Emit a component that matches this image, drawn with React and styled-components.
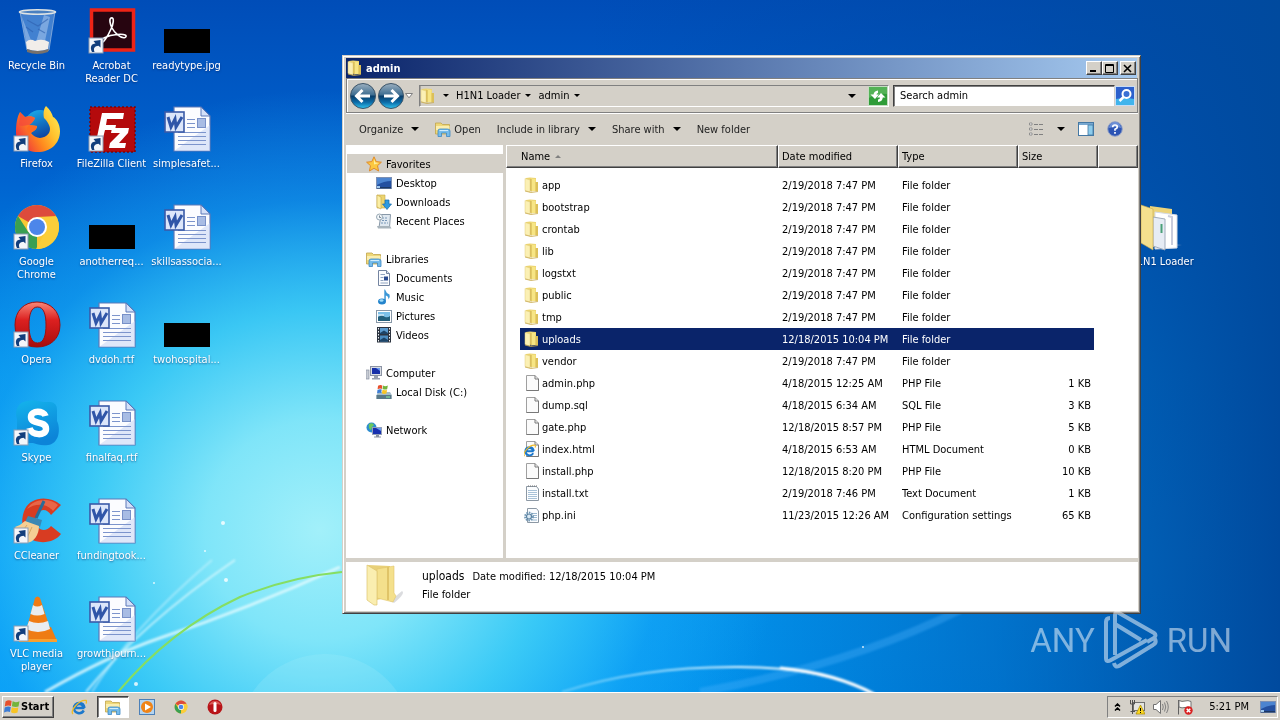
import React from "react";
import styled, { createGlobalStyle, css } from "styled-components";

const GlobalStyle = createGlobalStyle`
  * { box-sizing: border-box; }
  html, body, #root { height: 100%; }
  body {
    margin: 0;
    overflow: hidden;
    font-family: "DejaVu Sans Condensed", "DejaVu Sans", sans-serif;
    font-size: 11px;
    line-height: 13px;
    color: #000;
  }
  button, input { font: inherit; color: inherit; }
  svg { display: block; flex: none; }
`;

/* ---------- desktop ---------- */

const Screen = styled.div`
  position: relative;
  display: flex;
  flex-direction: column;
  height: 100vh;
  overflow: hidden;
`;

const Desktop = styled.main`
  position: relative;
  flex: 1;
  min-height: 0;
  background:
    radial-gradient(ellipse 460px 440px at 320px 530px, #a2f0fa 0%, rgba(134, 233, 249, 0.95) 25%, rgba(66, 208, 246, 0.88) 50%, rgba(30, 170, 245, 0.45) 75%, rgba(20, 150, 240, 0) 100%),
    linear-gradient(90deg, rgba(0, 72, 156, 0) 46%, rgba(0, 72, 160, 0.5) 78%, #004a9e 100%),
    linear-gradient(180deg, #004db8 0%, #0064d0 26%, #0090ec 54%, #04a0f8 80%, #009cf8 100%);
`;

const Streaks = styled.svg`
  position: absolute;
  left: 0;
  bottom: 0;
`;

const IconGrid = styled.div`
  position: relative;
  display: grid;
  grid-auto-flow: column;
  grid-template-rows: repeat(7, 98px);
  grid-auto-columns: 75px;
  padding-top: 7px;
`;

const Shortcut = styled.a`
  display: flex;
  flex-direction: column;
  align-items: center;
  gap: 4px;
  width: 73px;
  color: #fff;
  text-align: center;
  text-decoration: none;
  text-shadow: 0 1px 2px rgba(0, 30, 90, 0.6);
  grid-column: ${(p) => p.$col || "auto"};
  grid-row: ${(p) => p.$row || "auto"};
`;

const ShortcutLabel = styled.span`
  white-space: ${(p) => (p.$wrap ? "normal" : "nowrap")};
`;

/* ---------- window frame ---------- */

const Window = styled.section`
  position: absolute;
  left: 342px;
  right: 139px;
  top: 55px;
  padding: 2px;
  background: #d4d0c8;
  border: 1px solid;
  border-color: #d4d0c8 #404040 #404040 #d4d0c8;
  box-shadow: inset 1px 1px 0 #fff, inset -1px -1px 0 #808080;
`;

const TitleBar = styled.header`
  display: flex;
  align-items: center;
  gap: 3px;
  height: 20px;
  margin: 0 1px;
  padding: 0 1px;
  color: #fff;
  background: linear-gradient(90deg, #0a246a, #a6caf0);
`;

const Title = styled.h1`
  flex: 1;
  margin: 0;
  font-size: 11px;
  font-weight: bold;
`;

const TitleButtons = styled.div`
  display: flex;
`;

const raised = css`
  background: #d4d0c8;
  border: 1px solid;
  border-color: #fff #404040 #404040 #fff;
  box-shadow: inset -1px -1px 0 #808080;
`;

const TitleButton = styled.button`
  ${raised}
  display: grid;
  place-items: center;
  width: 16px;
  height: 14px;
  padding: 0;
  margin-left: ${(p) => (p.$apart ? "2px" : "0")};
`;

const NavBar = styled.nav`
  display: flex;
  align-items: center;
  height: 35px;
  margin-left: 1px;
  padding: 0 2px;
  border: 1px solid #808080;
  box-shadow: inset 1px 1px 0 #fff, 0 1px 0 #fff;
`;

const FlatButton = styled.button`
  display: flex;
  align-items: center;
  gap: ${(p) => p.$gap || "0"};
  padding: 0;
  border: 0;
  background: none;
`;

const AddressBox = styled.div`
  display: flex;
  align-items: center;
  flex: 1;
  gap: 7px;
  height: 22px;
  margin: 0 4px 0 6px;
  border: 1px solid;
  border-color: #808080 #fff #fff #808080;
  box-shadow: inset 1px 0 0 #a8a49c;
`;

const AddressEnd = styled.div`
  display: flex;
  align-items: center;
  gap: 12px;
  margin-left: auto;
`;

const SearchInput = styled.input`
  width: 222px;
  height: 22px;
  padding: 0 6px;
  border: 1px solid;
  border-color: #404040 #d4d0c8 #d4d0c8 #404040;
  box-shadow: inset 1px 1px 0 #808080;
  background: #fff;
  outline: none;
`;

const ToolBar = styled.div`
  display: flex;
  align-items: center;
  height: 32px;
  padding: 0 15px 0 14px;
  color: #222;
`;

const ToolGroup = styled.div`
  display: flex;
  align-items: center;
  gap: ${(p) => p.$gap};
  margin-left: ${(p) => (p.$end ? "auto" : "0")};
`;

/* ---------- panes ---------- */

const Panes = styled.div`
  display: flex;
  margin: 0 0 0 1px;
`;

const TreePane = styled.aside`
  width: 160px;
  padding-top: 9px;
  background: #fff;
  border-right: 3px solid #d4d0c8;
`;

const TreeGroup = styled.ul`
  list-style: none;
  margin: 0 0 19px;
  padding: 0;
`;

const TreeLink = styled.a`
  display: flex;
  align-items: center;
  gap: 4px;
  height: 19px;
  margin-left: 1px;
  padding: 1px 0 0 ${(p) => (p.$child ? "29px" : "19px")};
  color: #000;
  text-decoration: none;
  background: ${(p) => (p.$selected ? "#d4d0c8" : "none")};
`;

const ListPane = styled.div`
  flex: 1;
  min-width: 0;
  padding-bottom: 32px;
  background: #fff;
`;

const FileTable = styled.table`
  width: 100%;
  table-layout: fixed;
  border-collapse: separate;
  border-spacing: 0;
`;

const Col = styled.col`
  width: ${(p) => p.$w || "auto"};
`;

const HeadCell = styled.th`
  height: 23px;
  padding: 0 0 0 ${(p) => (p.$first ? "14px" : "3px")};
  text-align: left;
  font-weight: normal;
  background: #d4d0c8;
  border: 1px solid;
  border-color: #fff #404040 #404040 #fff;
  box-shadow: inset -1px -1px 0 #808080;
`;

const HeadLabel = styled.span`
  display: flex;
  align-items: center;
  gap: 5px;
`;

const Body = styled.tbody`
  &::before {
    content: "";
    display: block;
    height: 6px;
  }
`;

const BodyCell = styled.td`
  height: 22px;
  padding: 0 ${(p) => (p.$end ? "4px" : "0")} 0 ${(p) => (p.$first ? "14px" : "0")};
`;

const CellBox = styled.div`
  display: flex;
  align-items: center;
  gap: 2px;
  height: 22px;
  padding: 0 ${(p) => (p.$end ? "3px" : "0")} 0 4px;
  justify-content: ${(p) => (p.$end ? "flex-end" : "flex-start")};
  white-space: nowrap;
  color: ${(p) => (p.$selected ? "#fff" : "#000")};
  background: ${(p) => (p.$selected ? "#0a246a" : "none")};
`;

const Details = styled.footer`
  display: flex;
  align-items: center;
  gap: 12px;
  height: 53px;
  margin: 0 0 0 1px;
  padding: 0 0 3px 16px;
  border-top: 4px solid #d4d0c8;
  background: #fff;
`;

const DetailText = styled.div`
  display: flex;
  flex-direction: column;
  gap: 5px;
`;

const DetailLine = styled.p`
  display: flex;
  gap: 8px;
  margin: 0;
`;

const DetailName = styled.span`
  font-size: 12px;
`;

/* ---------- watermark ---------- */

const Watermark = styled.div`
  position: absolute;
  right: 48px;
  bottom: 48px;
  display: flex;
  align-items: center;
  gap: 8px;
  color: #fff;
  opacity: 0.5;
  font-family: "Roboto", sans-serif;
  font-size: 33px;
  line-height: 62px;
`;

/* ---------- taskbar ---------- */

const TaskBar = styled.footer`
  position: relative;
  display: flex;
  align-items: center;
  height: 28px;
  padding: 1px 2px;
  background: #d4d0c8;
  border-top: 1px solid #fff;
`;

const StartButton = styled.button`
  ${raised}
  display: flex;
  align-items: center;
  gap: 1px;
  width: 52px;
  height: 22px;
  padding: 0 0 0 1px;
  font-weight: bold;
`;

const QuickLaunch = styled.div`
  display: flex;
  align-items: center;
  gap: 2px;
  margin-left: 9px;
`;

const TaskButton = styled.button`
  display: grid;
  place-items: center;
  width: 32px;
  height: 22px;
  padding: 0;
  border: 1px solid transparent;
  background: none;
  ${(p) =>
    p.$active &&
    css`
      background: #fff;
      border-color: #404040 #fff #fff #404040;
      box-shadow: inset 1px 1px 0 #808080;
    `}
`;

const Tray = styled.div`
  display: flex;
  align-items: center;
  gap: 8px;
  height: 22px;
  margin-left: auto;
  padding: 0 1px 0 6px;
  border: 1px solid;
  border-color: #808080 #fff #fff #808080;
`;

const Clock = styled.time`
  margin: 0 3px 0 8px;
`;

/* ---------- large desktop icons ---------- */

const Arrow = () => (
  <g>
    <rect x="1" y="31" width="14" height="15" fill="#f4f6fa" stroke="#8c9cb4" />
    <path d="M4 45 C1.500 40 3.500 36.500 7.500 36.500 L5.500 34 L12.500 33 L12.500 40.500 L10.500 38.800 C7 39 5 41 6.500 45 Z" fill="#123e7c" />
  </g>
);

const Big = ({ children, arrow }) => (
  <svg width="48" height="48" viewBox="0 0 48 48" aria-hidden="true">
    {children}
    {arrow && <Arrow />}
  </svg>
);

const BinArt = () => (
  <Big>
    <path d="M7 5 L42 5 L36 43 Q25 48 14 43 Z" fill="#6ea2de" fillOpacity=".6" stroke="#b8cce4" strokeOpacity=".6" />
    <path d="M9 10 L19 36 L14 40 Z M31 8 L23 35 L32 34 L37 10 Z" fill="#cfe2f8" opacity=".4" />
    <path d="M14 13 L25 19 L35 12 M13 20 L20 25 M32 26 L25 22" stroke="#2d5fae" strokeWidth="1.200" fill="none" opacity=".6" />
    <path d="M13 35 Q17 31 22 34 Q29 31 36 35 L35 42 Q25 46 14 42 Z" fill="#f1ede9" />
    <path d="M14 42 Q24 46 36 42 L35 45 Q24 49 14 45 Z" fill="#77716c" />
    <ellipse cx="24.500" cy="5" rx="18" ry="2.200" fill="#4a80c0" stroke="#dfe4e4" strokeWidth="1.600" />
  </Big>
);

const AcrobatArt = () => (
  <Big arrow>
    <rect x="3.500" y="3" width="42" height="40" fill="#270510" stroke="#ee2416" strokeWidth="3.500" />
    <path d="M23 11 C27 10 25 18 23 22 C20 29 15 37 12 36 C10 33 20 28 29 27.500 C37 26.500 40 29 37 30.500 C33 32 26 25 24 21 C22 17 21 12 23 11 Z" fill="none" stroke="#fff" strokeWidth="1.600" />
  </Big>
);

const BlackArt = () => (
  <Big>
    <rect x="1" y="22" width="46" height="24" fill="#000" />
  </Big>
);

const FirefoxArt = () => (
  <Big arrow>
    <defs>
      <linearGradient id="fox" x1="1" y1="0.100" x2="0" y2=".7">
        <stop offset="0" stopColor="#ffef58" />
        <stop offset=".35" stopColor="#ffc22e" />
        <stop offset=".62" stopColor="#ff8a1e" />
        <stop offset="1" stopColor="#ee2e40" />
      </linearGradient>
      <linearGradient id="globe" x1="0" y1="0" x2=".4" y2="1">
        <stop offset="0" stopColor="#1cb4f0" />
        <stop offset="1" stopColor="#0c3c9c" />
      </linearGradient>
    </defs>
    <circle cx="27" cy="21" r="16" fill="url(#globe)" />
    <path d="M33 1 C37 5 39 8 40 12 C43 13 47 19 47 26 C47 39 37 47 25 47 C12 47 3 39 3 27 C3 19 4 12 7 7 L12 12 C16 11 19 11 22 13 C21 16 18 19 16 20 L24 21 C24 25 20 26 18 28 C22 34 31 35 36 28 C39 23 35 17 31 13 C30 8 31 3 33 1 Z" fill="url(#fox)" />
    <path d="M7 7 L12 12 C16 11 19 11 22 13 C21 16 18 19 16 20 C12 20 9 22 6 20 Z" fill="#f4483c" opacity=".75" />
    <path d="M16 20 L24 21 C24 25 20 26 18 28 C14 27 12 23 16 20 Z" fill="#ff6a20" />
  </Big>
);

const FileZillaArt = () => (
  <Big arrow>
    <rect x="2" y="2" width="45" height="45" fill="#b40a0c" stroke="#7e0408" strokeWidth="1.500" strokeDasharray="2 2" />
    <path d="M14 8 H36 L35 14 H19 L18 20 H28 L27 25 H17 L14 37 H8 Z" fill="#fff" />
    <path d="M24 23 H41 L40 28 L31 38 H38 L37 43 H21 L22 38 L32 28 H23 Z" fill="#fff" />
  </Big>
);

const WordArt = () => (
  <Big>
    <path d="M11 2 H38 L47 11 V46 H11 Z" fill="#fbfcff" stroke="#5c78b8" strokeWidth="1.200" />
    <path d="M11 46 L47 20 V46 Z" fill="#c8d6f4" opacity=".55" />
    <path d="M38 2 V11 H47 Z" fill="#d4e0f8" stroke="#5c78b8" />
    <path d="M24 14.500 H32 M24 18.500 H32 M24 22.500 H32 M15 27.500 H43 M15 31.500 H43 M15 35.500 H43 M15 39.500 H43" stroke="#7c94cc" />
    <rect x="34.500" y="13.500" width="8" height="9" fill="#a8bce4" stroke="#7890c8" />
    <rect x="2" y="7" width="19" height="20" fill="#dce6fa" stroke="#3a5aa8" strokeWidth="1.600" />
    <path d="M5 12 L8 22 L12 14 L13 22 L19 12" fill="none" stroke="#2f55a8" strokeWidth="3" />
  </Big>
);

const ChromeLogo = () => (
  <g>
    <circle cx="24" cy="24" r="22" fill="#f9c834" />
    <path d="M24 24 L4.950 13 A22 22 0 0 1 43.050 13 L24 14 Z" fill="#dd4b3c" />
    <path d="M24 24 L24 46 A22 22 0 0 1 4.950 13 L15.300 29 Z" fill="#3a9f52" />
    <path d="M24 14 H43.600 A22 22 0 0 1 23 46 L33 28 Z" fill="#fbce3a" />
    <circle cx="24" cy="24" r="10" fill="#fff" />
    <circle cx="24" cy="24" r="8" fill="#4c86ea" />
  </g>
);

const ChromeArt = () => (
  <Big arrow>
    <ChromeLogo />
  </Big>
);

const OperaArt = () => (
  <Big arrow>
    <defs>
      <linearGradient id="opera" x1="0" y1="0" x2="0" y2="1">
        <stop offset="0" stopColor="#f88878" />
        <stop offset=".4" stopColor="#dc2020" />
        <stop offset="1" stopColor="#a80c0c" />
      </linearGradient>
    </defs>
    <path fillRule="evenodd" d="M24 1 C37 1 47 10 47 24 C47 38 37 46 24 46 C11 46 2 38 2 24 C2 10 11 1 24 1 Z M24.500 6 C18 6 16 14 16 24 C16 34 18 42 24.500 42 C31 42 33 34 33 24 C33 14 31 6 24.500 6 Z" fill="url(#opera)" stroke="#9c1010" />
  </Big>
);

const SkypeArt = () => (
  <Big arrow>
    <defs>
      <linearGradient id="skype" x1="0" y1="0" x2=".3" y2="1">
        <stop offset="0" stopColor="#14b4ec" />
        <stop offset="1" stopColor="#0c84d8" />
      </linearGradient>
    </defs>
    <path d="M14 2 C20 0 26 2 30 3 H38 Q44 4 44 11 V22 C48 30 46 45 35 46 C28 47 24 45 20 44 H12 Q5 43 4 34 V20 C1 10 6 3 14 2 Z" fill="url(#skype)" />
    <path d="M32.500 17 C31 11.500 18 11 18 18 C18 26 33 21 33 30 C33 37 18.500 37 16.500 29" fill="none" stroke="#fff" strokeWidth="6.500" />
  </Big>
);

const CCleanerArt = () => (
  <Big arrow>
    <path d="M48 8 C36 -2 18 0 12 12 C6 25 10 40 22 44 C32 47 43 44 48 37 L38 29 C34 34 28 34 25 30 C21 24 23 14 30 13 C34 13 36 15 38 18 Z" fill="#d83c22" />
    <path d="M45 8 C36 0 20 2 14 12 C22 6 34 6 40 14 Z" fill="#f07858" opacity=".7" />
    <path d="M31 4 L23 21" stroke="#2a6c98" strokeWidth="3" />
    <path d="M15 19 L29 23 L27 30 L12 25 Z" fill="#3a88b4" />
    <path d="M12 24 L26 29 C26 38 21 45 14 46 L2 30 Q8 28 12 24 Z" fill="#f4cf94" />
    <path d="M14 28 L8 36 M19 30 L14 41" stroke="#d8a860" />
  </Big>
);

const VlcArt = () => (
  <Big arrow>
    <path d="M11 32 H38 L44 46 H6 Z" fill="#ee7c14" />
    <path d="M6 44 H44 V47 H6 Z" fill="#f8a030" />
    <path d="M22 3 Q24.500 0 27 3 L38 36 Q25 42 13 36 Z" fill="#f07c14" />
    <path d="M20 10 Q24 13 29 10 L31.500 19 Q24 22 17.500 19 Z M16 26 Q25 30 35 26 L37 34 Q25 40 13 34 Z" fill="#e9edf0" />
  </Big>
);

const OpenFolderArt = () => (
  <Big>
    <path d="M12 3 L34 6 V44 L12 44 Z" fill="#ecd47a" />
    <path d="M34 40 L44 42 L32 45 Z" fill="#5c88c0" opacity=".5" />
    <path d="M17 9 L39 12 L39 45 L17 46 Z" fill="#fff" stroke="#d4dae4" />
    <path d="M30 13 L34 14 V42" fill="none" stroke="#c8ccdc" strokeWidth="2" />
    <path d="M15 14 L27 16 V47 L15 43 Z" fill="#e6ecf4" stroke="#a0acbc" />
    <path d="M23.500 21 v9" stroke="#4aa078" strokeWidth="2" />
    <path d="M3 2 L15 6 V47 L3 40 Z" fill="#f4e08e" stroke="#c8a84c" strokeWidth=".6" />
  </Big>
);

/* ---------- 16px icons ---------- */

const Small = ({ size = 16, box = 16, children }) => (
  <svg width={size} height={size} viewBox={`0 0 ${box} ${box}`} aria-hidden="true">
    {children}
  </svg>
);

const FolderIcon = () => (
  <Small>
    <path d="M2 1 L6 .5 L12 1 V14 L2 13.500 Z" fill="#ecd470" />
    <path d="M7 1.500 L11.500 2 V14 L7 14.500 Z" fill="#f7e584" />
    <path d="M11.500 5 h2.500 v9 l-2.500 .5 z" fill="#dcc058" />
    <path d="M1 1.500 L6 3 V15 L1 13.500 Z" fill="#fbf0b4" stroke="#e0cc7c" strokeWidth=".5" />
    <path d="M7 2 V14.500" stroke="#c4a23c" strokeWidth=".8" />
    <path d="M1 14 L7 15.500 L14 14.500" fill="none" stroke="#c8a84c" strokeWidth=".8" />
  </Small>
);

const Page = () => (
  <g>
    <path d="M2.500 .5 H11 L14.500 4 V15.500 H2.500 Z" fill="#fbfbfb" stroke="#a0a0a0" />
    <path d="M11 .5 V4 H14.500 M14.500 4 V15.500 H2.500" fill="none" stroke="#787878" />
  </g>
);

const PageIcon = () => (
  <Small>
    <Page />
  </Small>
);

const GlyphE = () => (
  <g>
    <path d="M13.500 9 H4.500 C4.500 3.800 12 3.800 12 8.500 M12.800 11.500 C10 16 3 14.500 3 9 C3 3 12.500 1.500 13.500 9" fill="none" stroke="#1c78cc" strokeWidth="2.400" />
    <path d="M2 15 C-1.500 12 8 .5 15 1.500 C16 2 15.500 3.500 15 4.500" fill="none" stroke="#f0bc28" strokeWidth="1.400" />
  </g>
);

const HtmlIcon = () => (
  <Small>
    <Page />
    <g transform="translate(-1 3) scale(.8)">
      <GlyphE />
    </g>
  </Small>
);

const TextIcon = () => (
  <Small>
    <path d="M2.500 1.500 H12.500 L14.500 4 V15.500 H2.500 Z" fill="#fbfdff" stroke="#8c98a4" />
    <path d="M4 5.500 H13 M4 7.500 H13 M4 9.500 H13 M4 11.500 H13 M4 13.500 H13" stroke="#a8c2d8" />
    <path d="M4 1 h9" stroke="#777" strokeDasharray="1 1" />
  </Small>
);

const IniIcon = () => (
  <Small>
    <path d="M3.500 1.500 H12.500 L14.500 4 V15.500 H3.500 Z" fill="#fbfdff" stroke="#8c98a4" />
    <path d="M8 6.500 H13 M9 8.500 H13 M9 10.500 H13 M8 13 H13" stroke="#9ab8d0" />
    <circle cx="5" cy="9.500" r="4" fill="none" stroke="#6f96b4" strokeWidth="1.800" strokeDasharray="1.600 1" />
    <circle cx="5" cy="9.500" r="2.500" fill="#dceaf4" stroke="#5880a0" strokeWidth="1.200" />
  </Small>
);

const StarIcon = () => (
  <Small>
    <path d="M8 .8 L10.200 5.600 L15.400 6.200 L11.500 9.700 L12.600 15 L8 12.300 L3.400 15 L4.500 9.700 L.6 6.200 L5.800 5.600 Z" fill="#fcc840" stroke="#e08c2c" />
    <path d="M8 3 L9.300 6.500 L13 7 L8 8.500 Z" fill="#fff0a0" />
  </Small>
);

const DesktopIcon = () => (
  <Small>
    <rect x=".5" y="2.500" width="15" height="11" fill="#2450a0" stroke="#7c90b4" />
    <path d="M1 3 H15 V6 Q8 6 1 10 Z" fill="#4c84d0" />
    <rect x="1" y="12" width="14" height="1.500" fill="#1c3864" />
    <path d="M1 11 h3 v2 h-3 z" fill="#a4ccf0" />
  </Small>
);

const DownloadIcon = () => (
  <Small>
    <path d="M1 1 H9 V14 H1 Z" fill="#ecd470" stroke="#c8a848" strokeWidth=".6" />
    <path d="M1 1 L5 3 V15 L1 13 Z" fill="#fbeea4" stroke="#c8a848" strokeWidth=".6" />
    <path d="M9 6 H13 V10 H15.500 L11 15.500 L6.500 10 H9 Z" fill="#2c9ae0" stroke="#1468a8" strokeWidth=".7" />
  </Small>
);

const RecentIcon = () => (
  <Small>
    <path d="M5 1.500 H14.500 L13.500 14.500 H3 Z" fill="#dfe8f0" stroke="#8898a8" />
    <path d="M6 5 H12 M6 7.500 H12 M5 10 H12" stroke="#7898b8" strokeDasharray="2 1" />
    <circle cx="3.500" cy="4" r="3" fill="#f4f8fb" stroke="#98a8b4" />
    <path d="M3.500 2.500 V4.500 H5" fill="none" stroke="#607080" strokeWidth=".8" />
    <path d="M1 13 H14 L15.500 15.500 H2 Z" fill="#a8b4bc" />
  </Small>
);

const LibraryIcon = () => (
  <Small>
    <path d="M.5 2 H6 L7.500 3.500 H14.500 V13 H.5 Z" fill="#eed778" stroke="#c0a44c" strokeWidth=".8" />
    <path d="M1 5 H14.500 V9 H1 Z" fill="#faeeb0" />
    <path d="M3 15.500 V10 Q3 8 5 8 H12.500 Q15 8 15 10 V15.500 H11.500 V12 H6.500 V15.500 Z" fill="#76bcea" stroke="#3c88c4" strokeWidth=".8" />
    <path d="M4.500 9.500 H13" stroke="#d0ecfc" />
  </Small>
);

const DocIcon = () => (
  <Small>
    <path d="M2.500 .5 H10.500 L13.500 3.500 V15.500 H2.500 Z" fill="#fcfdff" stroke="#7484a0" />
    <path d="M10.500 .5 V3.500 H13.500" fill="#dce4f0" stroke="#7484a0" />
    <path d="M4.500 4.500 H9 M4.500 7.500 H7.500 M4.500 10.500 H7.500 M4.500 13 H12" stroke="#90a4c0" />
    <rect x="8" y="6.500" width="4" height="4" fill="#2c4c90" />
  </Small>
);

const MusicIcon = () => (
  <Small>
    <path d="M9 .5 Q10 4 13.500 5.500 Q14.500 8 12.500 10.500 Q12.500 7 9.800 6.500 V12 H8.300 V.5 Z" fill="#3c98d8" />
    <ellipse cx="6" cy="12.500" rx="4" ry="3" fill="#2484cc" />
    <ellipse cx="5.500" cy="11.500" rx="2" ry="1.200" fill="#a0dcf8" />
  </Small>
);

const PictureIcon = () => (
  <Small>
    <rect x=".5" y="2.500" width="15" height="12" fill="#fff" stroke="#8898a8" />
    <rect x="2" y="4" width="12" height="9" fill="#7cc0e8" />
    <path d="M2 9 Q6 6 9 9 Q12 10 14 8 V13 H2 Z" fill="#23607c" />
    <path d="M2 7 h6" stroke="#fff" />
  </Small>
);

const VideoIcon = () => (
  <Small>
    <rect x="1" y="0" width="14" height="15.500" fill="#2c3440" />
    <rect x="4" y="1" width="8" height="6" fill="#5c9cd0" />
    <rect x="4" y="8.500" width="8" height="6" fill="#4c8cc0" />
    <path d="M4 6 L8 3.500 L12 6 V7 H4 Z M4 13 L8 10.500 L12 13 V14.500 H4 Z" fill="#1c4468" />
    <path d="M2.500 1 V15 M13.500 1 V15" stroke="#f0f4f8" strokeDasharray="1.500 1.500" />
  </Small>
);

const ComputerIcon = () => (
  <Small>
    <rect x="0" y="5" width="3" height="9" fill="#c8ccd4" stroke="#8890a0" strokeWidth=".7" />
    <rect x="4.500" y="1.500" width="11" height="9" fill="#d8dce4" stroke="#8c94a4" />
    <rect x="6" y="3" width="8" height="6" fill="#1830a8" />
    <path d="M10 3 H14 V6 Z" fill="#6c9cf0" />
    <path d="M8 11 h4 v2 h2 v1.500 h-8 V13 h2 z" fill="#98a0b0" />
  </Small>
);

const Flag = () => (
  <g>
    <path d="M1.500 2.500 Q4.500 .5 7.600 2 L6.900 7 Q4 6 .8 7.500 Z" fill="#e8502c" />
    <path d="M8.600 2.300 Q11.500 4 15.500 2.200 L14.500 7.500 Q11.500 8.500 7.900 7.200 Z" fill="#74b43c" />
    <path d="M.7 8.500 Q4 7 6.800 8 L6 13 Q3.500 12 0 13.500 Z" fill="#3c7cd4" />
    <path d="M7.800 8.300 Q10.800 9.500 14.300 8.500 L13.500 13.500 Q10 15 7 13.300 Z" fill="#f8c424" />
  </g>
);

const DiskIcon = () => (
  <Small>
    <path d="M2 9 L4 8 H14 L15.500 10.500 V15 H.5 V11 Z" fill="#a4bcc8" />
    <path d="M.5 11 H15.500 V15 H.5 Z" fill="#587888" />
    <path d="M10 13 h4" stroke="#88f0a0" />
    <g transform="translate(1 0) scale(.7)">
      <Flag />
    </g>
  </Small>
);

const NetworkIcon = () => (
  <Small>
    <circle cx="5.500" cy="5.500" r="5" fill="#2c8cd0" />
    <path d="M3 2 Q7 0 8 3 Q5 5 5 8 Q2 7 3 2 Z" fill="#6cc85c" />
    <rect x="6.500" y="5.500" width="9" height="7" fill="#1830b0" stroke="#94a0b8" />
    <path d="M10 6 H15 V9 Z" fill="#6c9cf0" />
    <path d="M10 13 h3 v1.500 h2 v1 h-7 v-1 h2 z" fill="#8890a0" />
  </Small>
);

const BackIcon = ({ flip }) => (
  <svg width="28" height="28" viewBox="0 0 28 28" aria-hidden="true">
    <defs>
      <linearGradient id="orb" x1="0" y1="0" x2="0" y2="1">
        <stop offset="0" stopColor="#9cb0c0" />
        <stop offset=".46" stopColor="#3c6c90" />
        <stop offset=".5" stopColor="#083c68" />
        <stop offset=".75" stopColor="#0c6ca8" />
        <stop offset="1" stopColor="#30c4f0" />
      </linearGradient>
    </defs>
    <circle cx="14" cy="14" r="12.500" fill="url(#orb)" stroke="#3c5468" />
    <g transform={flip ? "matrix(-1 0 0 1 28 0)" : undefined}>
      <path d="M13.500 8 L7.500 14 L13.500 20 M8 14 H21" fill="none" stroke="#fff" strokeWidth="3" />
    </g>
  </svg>
);

const Caret = ({ wide }) => (
  <svg width={wide ? 8 : 6} height={wide ? 4 : 3} viewBox="0 0 8 4" aria-hidden="true">
    <path d="M0 0 H8 L4 4 Z" fill="#000" />
  </svg>
);

const HistoryCaret = () => (
  <svg width="8" height="6" viewBox="0 0 8 6" aria-hidden="true">
    <path d="M.5 .5 H7.500 L4 4.800 Z" fill="#fff" stroke="#808080" />
  </svg>
);

const RefreshIcon = () => (
  <svg width="20" height="20" viewBox="0 0 20 20" aria-hidden="true">
    <rect x=".5" y=".5" width="19" height="19" fill="#2f9c38" stroke="#c4dcc0" />
    <path d="M1 1 H19 V8 Q9 7 1 12 Z" fill="#64bc64" opacity=".7" />
    <path d="M7 13 L2.500 8.500 H5.500 Q6 5 10 4.500 V7 Q8.500 7 8.500 8.500 H11 Z" fill="#fff" />
    <path d="M13 7 L17.500 11.500 H14.800 Q14.500 15.500 10 16 V13.500 Q12 13.300 12 11.500 H9 Z" fill="#fff" />
  </svg>
);

const SearchIcon = () => (
  <svg width="20" height="20" viewBox="0 0 20 20" aria-hidden="true">
    <rect x=".5" y=".5" width="19" height="19" fill="#2c60cc" stroke="#c8dcf4" />
    <path d="M1 13 Q10 11 19 13 V19 H1 Z" fill="#40b4ec" />
    <circle cx="11.500" cy="8" r="4" fill="#3a70d4" stroke="#fff" strokeWidth="2" />
    <path d="M8.500 11 L4.500 15" stroke="#fff" strokeWidth="2.500" />
  </svg>
);

const ViewIcon = () => (
  <Small>
    <path d="M1.500 2 h2.500 v2 h-2.500 z M1.500 7 h2.500 v2 h-2.500 z M1.500 12 h2.500 v2 h-2.500 z" fill="#fff" stroke="#909090" />
    <path d="M6 3.500 H16 M6 8.500 H16 M6 13.500 H16" stroke="#808080" strokeDasharray="4 1" />
  </Small>
);

const PaneIcon = () => (
  <Small>
    <rect x=".5" y="1.500" width="15" height="13" fill="#fff" stroke="#4478a4" />
    <path d="M1 3 H15" stroke="#78a8d0" strokeWidth="2" />
    <rect x="10" y="4" width="5" height="10" fill="#8cccec" stroke="#4478a4" strokeWidth=".8" />
  </Small>
);

const HelpIcon = () => (
  <Small>
    <circle cx="8" cy="8" r="7.300" fill="#2c54b4" stroke="#94a4c8" />
    <path d="M2 7 A6 6 0 0 1 14 7 Q8 5 2 7 Z" fill="#88a8e4" opacity=".7" />
    <path d="M5.700 6.200 Q5.700 4 8 4 Q10.300 4 10.300 6 Q10.300 7.300 8 8.300 V9.700 M8 11 V12.700" fill="none" stroke="#fff" strokeWidth="1.700" />
  </Small>
);

const SortIcon = () => (
  <svg width="6" height="3" viewBox="0 0 6 3" aria-hidden="true">
    <path d="M0 3 L3 0 L6 3 Z" fill="#808080" />
  </svg>
);

const DetailFolder = () => (
  <svg width="48" height="44" viewBox="0 0 48 44" aria-hidden="true">
    <path d="M28 38 L40 28 Q44 30 32 40 Z" fill="#a4a8b0" opacity=".4" />
    <path d="M6 2 L28 3 V34 L10 38 Z" fill="#e8d078" />
    <path d="M15 6 L32 3 V30 L34 33 L31 39 L15 35 Z" fill="#f4e08c" stroke="#e0c46c" strokeWidth=".6" />
    <path d="M26 4 V37" stroke="#e0c468" strokeWidth="2" />
    <path d="M5 2 L15 8 V42 L12 42 L5 37 Z" fill="#faeeb0" stroke="#dcc470" strokeWidth=".7" />
  </svg>
);

const WmpIcon = () => (
  <Small>
    <rect x=".5" y=".5" width="15" height="15" fill="#b4d4f0" stroke="#4c80b8" />
    <circle cx="8" cy="8" r="6" fill="#f08418" />
    <path d="M6 4.500 L12 8 L6 11.500 Z" fill="#fff" />
  </Small>
);

const OperaSmall = () => (
  <Small>
    <circle cx="8" cy="8" r="7.500" fill="#b81418" />
    <path d="M2 6 A6.500 6.500 0 0 1 14 6 Q8 4 2 6 Z" fill="#e87870" opacity=".7" />
    <rect x="6.500" y="3" width="3" height="10" rx="1.500" fill="#fff" />
  </Small>
);

const NetTray = () => (
  <Small>
    <rect x="4.500" y="3.500" width="11" height="8" fill="#e4e4e0" stroke="#707070" />
    <path d="M1.500 1 V5 H5.500 V1 M3.500 1 V15 M1.500 12.500 H6" fill="none" stroke="#505050" />
    <path d="M11.500 6 L16 15 H7 Z" fill="#fcd820" stroke="#a88800" strokeWidth=".7" />
    <path d="M11.500 9 V12 M11.500 13 V14" stroke="#000" />
  </Small>
);

const SoundTray = () => (
  <Small>
    <path d="M.5 5.500 H3 L7.500 1.500 V14.500 L3 10.500 H.5 Z" fill="#fff" stroke="#707070" />
    <path d="M9.500 5 Q11 8 9.500 11 M11.500 3.500 Q14 8 11.500 12.500 M13.500 2 Q17 8 13.500 14" fill="none" stroke="#808080" />
  </Small>
);

const FlagTray = () => (
  <Small>
    <path d="M1.500 1 V15.500" stroke="#606060" />
    <path d="M2 1.500 Q5 3 8 2 Q11 1 14 2.500 V9 Q11 7.500 8 8.500 Q5 9.500 2 8 Z" fill="#fff" stroke="#707070" />
    <circle cx="11.500" cy="11.500" r="4.200" fill="#d82020" />
    <path d="M9.700 9.700 L13.300 13.300 M13.300 9.700 L9.700 13.300" stroke="#fff" strokeWidth="1.500" />
  </Small>
);

const ChevronTray = () => (
  <svg width="7" height="8" viewBox="0 0 7 8" aria-hidden="true">
    <path d="M1 3.500 L3.500 1 L6 3.500 M1 7.500 L3.500 5 L6 7.500" fill="none" stroke="#000" strokeWidth="1.500" />
  </svg>
);

const AnyRunMark = () => (
  <svg width="56" height="62" viewBox="0 0 56 62" aria-hidden="true">
    <path d="M12 45 V5 Q12 1 16 3 L51 23 Q54 25 51 28 L44 32 M7 8 Q3 8 3 12 V48 Q3 53 8 50 L44 30 M12 14 L38 30 M52 29 Q54 33 50 35 L16 56 Q12 58 11 53" fill="none" stroke="#fff" strokeWidth="4" />
  </svg>
);

/* ---------- data ---------- */

const desktopItems = [
  ["Recycle Bin", BinArt],
  ["Firefox", FirefoxArt],
  ["Google Chrome", ChromeArt, true],
  ["Opera", OperaArt],
  ["Skype", SkypeArt],
  ["CCleaner", CCleanerArt],
  ["VLC media player", VlcArt, true],
  ["Acrobat Reader DC", AcrobatArt, true],
  ["FileZilla Client", FileZillaArt],
  ["anotherreq...", BlackArt],
  ["dvdoh.rtf", WordArt],
  ["finalfaq.rtf", WordArt],
  ["fundingtook...", WordArt],
  ["growthjourn...", WordArt],
  ["readytype.jpg", BlackArt],
  ["simplesafet...", WordArt],
  ["skillsassocia...", WordArt],
  ["twohospital...", BlackArt],
];

const tree = [
  [["Favorites", StarIcon], ["Desktop", DesktopIcon], ["Downloads", DownloadIcon], ["Recent Places", RecentIcon]],
  [["Libraries", LibraryIcon], ["Documents", DocIcon], ["Music", MusicIcon], ["Pictures", PictureIcon], ["Videos", VideoIcon]],
  [["Computer", ComputerIcon], ["Local Disk (C:)", DiskIcon]],
  [["Network", NetworkIcon]],
];

const files = [
  ["app", "2/19/2018 7:47 PM", "File folder", "", FolderIcon],
  ["bootstrap", "2/19/2018 7:47 PM", "File folder", "", FolderIcon],
  ["crontab", "2/19/2018 7:47 PM", "File folder", "", FolderIcon],
  ["lib", "2/19/2018 7:47 PM", "File folder", "", FolderIcon],
  ["logstxt", "2/19/2018 7:47 PM", "File folder", "", FolderIcon],
  ["public", "2/19/2018 7:47 PM", "File folder", "", FolderIcon],
  ["tmp", "2/19/2018 7:47 PM", "File folder", "", FolderIcon],
  ["uploads", "12/18/2015 10:04 PM", "File folder", "", FolderIcon],
  ["vendor", "2/19/2018 7:47 PM", "File folder", "", FolderIcon],
  ["admin.php", "4/18/2015 12:25 AM", "PHP File", "1 KB", PageIcon],
  ["dump.sql", "4/18/2015 6:34 AM", "SQL File", "3 KB", PageIcon],
  ["gate.php", "12/18/2015 8:57 PM", "PHP File", "5 KB", PageIcon],
  ["index.html", "4/18/2015 6:53 AM", "HTML Document", "0 KB", HtmlIcon],
  ["install.php", "12/18/2015 8:20 PM", "PHP File", "10 KB", PageIcon],
  ["install.txt", "2/19/2018 7:46 PM", "Text Document", "1 KB", TextIcon],
  ["php.ini", "11/23/2015 12:26 AM", "Configuration settings", "65 KB", IniIcon],
];

/* ---------- parts ---------- */

const Wallpaper = () => (
  <Streaks width="1280" height="692" viewBox="0 0 1280 692" aria-hidden="true">
    <defs>
      <filter id="soft">
        <feGaussianBlur stdDeviation="1" />
      </filter>
      <linearGradient id="arc" x1="0" x2="1">
        <stop offset="0" stopColor="#9ce0ff" stopOpacity=".5" />
        <stop offset=".6" stopColor="#e8f8ff" />
        <stop offset="1" stopColor="#fff" />
      </linearGradient>
    </defs>
    <circle cx="325" cy="742" r="88" fill="#b0f0fc" opacity=".2" />
    <path d="M700 692 Q850 665 960 610" fill="none" stroke="#58b8ff" strokeWidth="8" opacity=".3" filter="url(#soft)" />
    <g fill="none" filter="url(#soft)">
      <path d="M45 692 Q110 655 160 638 Q250 608 340 567" stroke="#e8fcff" strokeWidth="3" opacity=".8" />
      <path d="M86 692 Q140 625 235 560" stroke="#e8fcff" strokeWidth="2" opacity=".7" />
      <path d="M92 692 Q130 630 212 560" stroke="#d8f8ff" strokeWidth="2" opacity=".5" />
      <path d="M562 692 Q640 667 734 667 Q820 666 874 694" stroke="url(#arc)" strokeWidth="2" />
      <path d="M780 668 Q835 673 874 694" stroke="#fff" strokeWidth="3" />
    </g>
    <path d="M118 692 Q170 630 240 597 Q290 577 342 572" fill="none" stroke="#86de62" strokeWidth="2" />
    <g fill="#fff" opacity=".8">
      <circle cx="223" cy="523" r="2" />
      <circle cx="226" cy="580" r="2" />
      <circle cx="205" cy="551" r="1" />
      <circle cx="110" cy="560" r="1" />
      <circle cx="136" cy="684" r="2" />
      <circle cx="154" cy="583" r="1" />
      <circle cx="863" cy="647" r="1" />
    </g>
  </Streaks>
);

const DesktopShortcut = ({ name, art: Art, wrap, col, row }) => (
  <Shortcut href="#" $col={col} $row={row}>
    <Art />
    <ShortcutLabel $wrap={wrap}>{name}</ShortcutLabel>
  </Shortcut>
);

const FileRow = ({ file }) => {
  const [name, date, type, size, Icon] = file;
  const selected = name === "uploads";
  return (
    <tr>
      <BodyCell $first>
        <CellBox $selected={selected}>
          <Icon />
          {name}
        </CellBox>
      </BodyCell>
      <BodyCell><CellBox $selected={selected}>{date}</CellBox></BodyCell>
      <BodyCell><CellBox $selected={selected}>{type}</CellBox></BodyCell>
      <BodyCell $end><CellBox $selected={selected} $end>{size}</CellBox></BodyCell>
      <td />
    </tr>
  );
};

const ExplorerWindow = () => (
  <Window aria-label="admin">
    <TitleBar>
      <FolderIcon />
      <Title>admin</Title>
      <TitleButtons>
        <TitleButton aria-label="Minimize">
          <svg width="10" height="9"><path d="M1 7 H7" stroke="#000" strokeWidth="2" /></svg>
        </TitleButton>
        <TitleButton aria-label="Maximize">
          <svg width="10" height="9"><path d="M.5 .5 H8.500 V8.500 H.5 Z M0 1.500 H9" fill="none" stroke="#000" /></svg>
        </TitleButton>
        <TitleButton aria-label="Close" $apart>
          <svg width="10" height="9"><path d="M1 1 L8 8 M8 1 L1 8" stroke="#000" strokeWidth="1.600" /></svg>
        </TitleButton>
      </TitleButtons>
    </TitleBar>
    <NavBar>
      <FlatButton aria-label="Back"><BackIcon /></FlatButton>
      <FlatButton aria-label="Forward"><BackIcon flip /></FlatButton>
      <FlatButton aria-label="History"><HistoryCaret /></FlatButton>
      <AddressBox>
        <FolderIcon />
        <FlatButton aria-label="Root"><Caret /></FlatButton>
        <FlatButton $gap="5px">H1N1 Loader <Caret /></FlatButton>
        <FlatButton $gap="5px">admin <Caret /></FlatButton>
        <AddressEnd>
          <FlatButton aria-label="Previous locations"><Caret wide /></FlatButton>
          <FlatButton aria-label="Refresh"><RefreshIcon /></FlatButton>
        </AddressEnd>
      </AddressBox>
      <SearchInput aria-label="Search" defaultValue="Search admin" />
      <FlatButton aria-label="Go"><SearchIcon /></FlatButton>
    </NavBar>
    <ToolBar>
      <ToolGroup $gap="16px">
        <FlatButton $gap="8px">Organize <Caret wide /></FlatButton>
        <FlatButton $gap="3px"><LibraryIcon /> Open</FlatButton>
        <FlatButton $gap="8px">Include in library <Caret wide /></FlatButton>
        <FlatButton $gap="8px">Share with <Caret wide /></FlatButton>
        <FlatButton>New folder</FlatButton>
      </ToolGroup>
      <ToolGroup $end $gap="13px">
        <FlatButton aria-label="Change view"><ViewIcon /></FlatButton>
        <FlatButton aria-label="More views"><Caret wide /></FlatButton>
        <FlatButton aria-label="Preview pane"><PaneIcon /></FlatButton>
        <FlatButton aria-label="Help"><HelpIcon /></FlatButton>
      </ToolGroup>
    </ToolBar>
    <Panes>
      <TreePane>
        {tree.map((group) => (
          <TreeGroup key={group[0][0]}>
            {group.map(([name, Icon], i) => (
              <li key={name}>
                <TreeLink href="#" $child={i > 0} $selected={name === "Favorites"}>
                  <Icon />
                  {name}
                </TreeLink>
              </li>
            ))}
          </TreeGroup>
        ))}
      </TreePane>
      <ListPane>
        <FileTable>
          <colgroup>
            <Col $w="272px" />
            <Col $w="120px" />
            <Col $w="120px" />
            <Col $w="80px" />
            <Col />
          </colgroup>
          <thead>
            <tr>
              <HeadCell $first><HeadLabel>Name <SortIcon /></HeadLabel></HeadCell>
              <HeadCell>Date modified</HeadCell>
              <HeadCell>Type</HeadCell>
              <HeadCell>Size</HeadCell>
              <HeadCell />
            </tr>
          </thead>
          <Body>
            {files.map((file) => (
              <FileRow key={file[0]} file={file} />
            ))}
          </Body>
        </FileTable>
      </ListPane>
    </Panes>
    <Details>
      <DetailFolder />
      <DetailText>
        <DetailLine>
          <DetailName>uploads</DetailName>
          <span>Date modified: 12/18/2015 10:04 PM</span>
        </DetailLine>
        <DetailLine>File folder</DetailLine>
      </DetailText>
    </Details>
  </Window>
);

export default function App() {
  return (
    <Screen>
      <GlobalStyle />
      <Desktop>
        <Wallpaper />
        <IconGrid>
          {desktopItems.map(([name, art, wrap]) => (
            <DesktopShortcut key={name} name={name} art={art} wrap={wrap} />
          ))}
          <DesktopShortcut name="H1N1 Loader" art={OpenFolderArt} col={16} row={3} />
        </IconGrid>
        <ExplorerWindow />
      </Desktop>
      <TaskBar>
        <StartButton>
          <Small><Flag /></Small>
          Start
        </StartButton>
        <QuickLaunch>
          <TaskButton aria-label="Internet Explorer"><Small><GlyphE /></Small></TaskButton>
          <TaskButton aria-label="Windows Explorer" $active><LibraryIcon /></TaskButton>
          <TaskButton aria-label="Media Player"><WmpIcon /></TaskButton>
          <TaskButton aria-label="Chrome"><Small size={14} box={48}><ChromeLogo /></Small></TaskButton>
          <TaskButton aria-label="Opera"><OperaSmall /></TaskButton>
        </QuickLaunch>
        <Tray>
          <ChevronTray />
          <NetTray />
          <SoundTray />
          <FlagTray />
          <Clock>5:21 PM</Clock>
          <DesktopIcon />
        </Tray>
      </TaskBar>
      <Watermark>
        <span>ANY</span>
        <AnyRunMark />
        <span>RUN</span>
      </Watermark>
    </Screen>
  );
}
